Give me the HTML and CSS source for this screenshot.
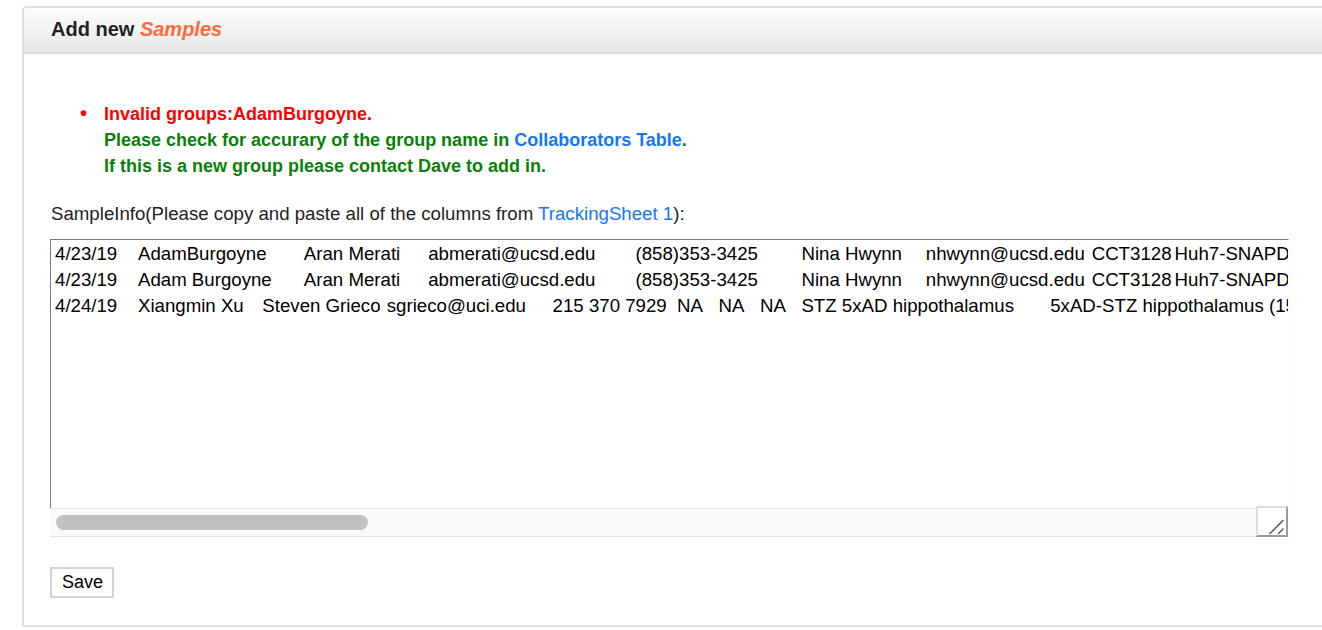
FILE: index.html
```html
<!DOCTYPE html>
<html>
<head>
<meta charset="utf-8">
<title>Add new Samples</title>
<link rel="stylesheet" href="styles.css">
</head>
<body>
<div class="panel">
  <div class="panel-head">
    <h2 class="panel-title">Add new <em>Samples</em></h2>
  </div>
  <div class="panel-body">
    <ul class="messages">
      <li><span class="msg-error">Invalid groups:AdamBurgoyne.</span><br><span class="msg-info">Please check for accurary of the group name in <a class="link" href="#">Collaborators Table</a>.</span><br><span class="msg-info">If this is a new group please contact Dave to add in.</span></li>
    </ul>
    <label class="field-label" for="sampleinfo">SampleInfo(Please copy and paste all of the columns from <a class="link" href="#">TrackingSheet 1</a>):</label>
    <div class="sample-box">
      <textarea id="sampleinfo" class="sample-input" wrap="off">4/23/19	AdamBurgoyne	Aran Merati	abmerati@ucsd.edu	(858)353-3425	Nina Hwynn	nhwynn@ucsd.edu	CCT3128	Huh7-SNAPD
4/23/19	Adam Burgoyne	Aran Merati	abmerati@ucsd.edu	(858)353-3425	Nina Hwynn	nhwynn@ucsd.edu	CCT3128	Huh7-SNAPD
4/24/19	Xiangmin Xu	Steven Grieco	sgrieco@uci.edu	215 370 7929	NA	NA	NA	STZ 5xAD hippothalamus	5xAD-STZ hippothalamus (15</textarea>
      <div class="hscroll">
        <div class="hscroll-track"><div class="hscroll-thumb"></div></div>
        <div class="resize-grip">
          <svg width="28" height="27" viewBox="0 0 28 27" aria-hidden="true">
            <line x1="11.5" y1="26" x2="25.5" y2="12" stroke="#555" stroke-width="1.4"/>
            <line x1="20" y1="26" x2="25.5" y2="20.5" stroke="#555" stroke-width="1.4"/>
          </svg>
        </div>
      </div>
    </div>
    <button class="btn-save" type="button">Save</button>
  </div>
</div>
</body>
</html>
```

FILE: styles.css
```css
html, body {
  margin: 0;
  padding: 0;
  background: #ffffff;
  overflow: hidden;
}

body {
  font-family: "Liberation Sans", Arial, Helvetica, sans-serif;
  color: #222222;
}

.panel {
  margin: 6px 0 0 22px;
  width: 1330px;
  border: 2px solid #dedede;
  border-radius: 5px 5px 0 0;
  background: #ffffff;
}

.panel-head {
  height: 44px;
  border-bottom: 2px solid #dcdcdc;
  background: linear-gradient(to bottom, #fdfdfd 0%, #f1f1f1 55%, #e6e6e6 100%);
  border-radius: 4px 4px 0 0;
  display: flex;
  align-items: center;
  padding-left: 27px;
}

.panel-title {
  margin: -2px 0 0 0;
  font-size: 20px;
  font-weight: bold;
  color: #222222;
  line-height: 24px;
}

.panel-title em {
  color: #fd6a3b;
  font-style: italic;
}

.panel-body {
  padding: 0 26px 27px 26px;
}

.messages {
  margin: 46px 0 0 0;
  padding: 0 0 0 54px;
  list-style: none;
  font-size: 18px;
  font-weight: bold;
  line-height: 26px;
}

.messages li::before {
  content: "\2022";
  display: inline-block;
  width: 27px;
  margin-left: -27px;
  color: #ff0000;
  font-size: 20px;
  text-indent: 3px;
}

.msg-error {
  color: #ff0000;
}

.msg-info {
  color: #0a7f0a;
}

.link {
  color: #1576f5;
  text-decoration: none;
}

.field-label {
  display: block;
  margin-top: 22px;
  padding-left: 1px;
  font-size: 18.67px;
  line-height: 26px;
  color: #222222;
}

.sample-box {
  margin-top: 12px;
  width: 1239px;
  height: 298px;
  box-sizing: border-box;
  border-top: 1px solid #7c7c7c;
  border-right: 1px solid #fafafa;
  border-bottom: 1px solid #e4e4e4;
  display: flex;
  flex-direction: column;
  background: #ffffff;
}

.sample-input {
  display: block;
  flex: 1;
  box-sizing: border-box;
  width: 100%;
  margin: 0;
  padding: 1px 4px 0 4px;
  border: 0;
  border-left: 1px solid #7c7c7c;
  font-family: "Liberation Sans", Arial, Helvetica, sans-serif;
  font-size: 18.67px;
  line-height: 26px;
  color: #000000;
  background: #ffffff;
  white-space: pre;
  overflow: hidden;
  tab-size: 8;
  resize: none;
  outline: none;
}

.hscroll {
  height: 28px;
  display: flex;
  align-items: flex-end;
}

.hscroll-track {
  flex: 1;
  align-self: stretch;
  box-sizing: border-box;
  background: #fafafa;
  border-top: 1px solid #e6e6e6;
  padding: 6px 0 0 6px;
}

.hscroll-thumb {
  width: 312px;
  height: 15px;
  border-radius: 8px;
  background: #c1c1c1;
}

.resize-grip {
  box-sizing: border-box;
  width: 32px;
  height: 31px;
  margin-bottom: -1px;
  background: #ffffff;
  border-top: 2px solid #dcdcdc;
  border-left: 2px solid #dcdcdc;
  border-right: 2px solid #9a9a9a;
  border-bottom: 2px solid #9a9a9a;
  display: flex;
}

.resize-grip svg {
  display: block;
}

.btn-save {
  display: block;
  margin-top: 30px;
  box-sizing: border-box;
  height: 31px;
  padding: 0 9px 0 10px;
  border: 2px solid #d2d2d2;
  background: #ffffff;
  font-family: "Liberation Sans", Arial, Helvetica, sans-serif;
  font-size: 18px;
  line-height: 25px;
  color: #000000;
  border-radius: 0;
}
```
